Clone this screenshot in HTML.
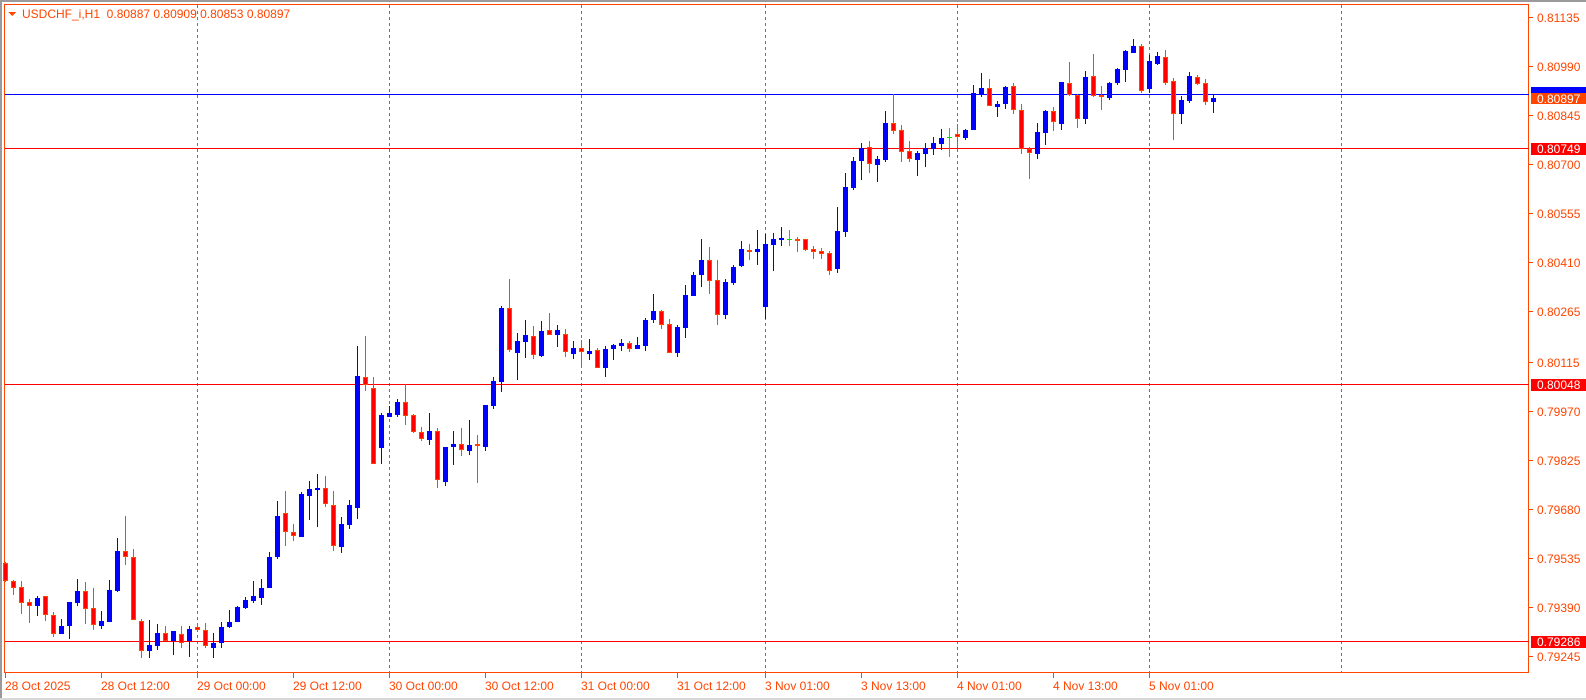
<!DOCTYPE html>
<html><head><meta charset="utf-8"><style>
html,body{margin:0;padding:0;background:#fff;width:1586px;height:700px;overflow:hidden}
svg{display:block}
text{font-family:"Liberation Sans",sans-serif;font-size:12px}
</style></head><body>
<svg width="1586" height="700" viewBox="0 0 1586 700" xmlns="http://www.w3.org/2000/svg" shape-rendering="crispEdges">
<rect x="0" y="0" width="1586" height="700" fill="#fff"/>
<rect x="0" y="0" width="1586" height="2" fill="#9a9a9a"/>
<rect x="0" y="0" width="2" height="700" fill="#9a9a9a"/>
<rect x="0" y="698" width="1586" height="2" fill="#d8d8d8"/>
<rect x="4.5" y="4.5" width="1524" height="668" fill="none" stroke="#ff4500" stroke-width="1"/>
<g stroke="#ff4500" stroke-width="1" stroke-dasharray="3,3">
<line x1="197.5" y1="5" x2="197.5" y2="672"/>
<line x1="389.5" y1="5" x2="389.5" y2="672"/>
<line x1="581.5" y1="5" x2="581.5" y2="672"/>
<line x1="765.5" y1="5" x2="765.5" y2="672"/>
<line x1="957.5" y1="5" x2="957.5" y2="672"/>
<line x1="1149.5" y1="5" x2="1149.5" y2="672"/>
<line x1="1341.5" y1="5" x2="1341.5" y2="672"/>
</g>
<rect x="5" y="94" width="1524" height="1" fill="#0000ff"/>
<rect x="5" y="148" width="1524" height="1" fill="#ff0000"/>
<rect x="5" y="384" width="1524" height="1" fill="#ff0000"/>
<rect x="5" y="641" width="1524" height="1" fill="#ff0000"/>
<polygon points="8,12 16,12 12,16" fill="#ff4500"/>
<text x="22" y="18" fill="#ff4500" xml:space="preserve">USDCHF_i,H1  0.80887 0.80909 0.80853 0.80897</text>
<path fill="#0000ff" d="M35 598h5v8h-5zM37 596h1v20h-1zM59 626h5v8h-5zM61 619h1v15h-1zM67 602h5v24h-5zM69 602h1v37h-1zM75 591h5v12h-5zM77 579h1v27h-1zM99 621h5v5h-5zM101 611h1v18h-1zM107 590h5v32h-5zM109 580h1v42h-1zM115 551h5v40h-5zM117 538h1v54h-1zM147 645h5v6h-5zM149 620h1v38h-1zM155 633h5v13h-5zM157 624h1v26h-1zM171 631h5v10h-5zM173 631h1v24h-1zM187 629h5v12h-5zM189 626h1v31h-1zM211 643h5v5h-5zM213 633h1v25h-1zM219 627h5v16h-5zM221 622h1v26h-1zM227 622h5v5h-5zM229 610h1v18h-1zM235 607h5v15h-5zM237 606h1v16h-1zM243 600h5v8h-5zM245 597h1v12h-1zM251 596h5v5h-5zM253 581h1v22h-1zM259 588h5v10h-5zM261 579h1v26h-1zM267 557h5v31h-5zM269 552h1v36h-1zM275 516h5v41h-5zM277 501h1v58h-1zM299 494h5v43h-5zM301 492h1v45h-1zM307 489h5v7h-5zM309 481h1v39h-1zM315 488h5v2h-5zM317 474h1v53h-1zM339 524h5v23h-5zM341 517h1v36h-1zM347 505h5v20h-5zM349 500h1v29h-1zM355 376h5v132h-5zM357 346h1v173h-1zM379 415h5v33h-5zM381 413h1v51h-1zM387 413h5v4h-5zM389 406h1v11h-1zM395 402h5v13h-5zM397 399h1v18h-1zM427 431h5v9h-5zM429 413h1v32h-1zM443 447h5v35h-5zM445 447h1v39h-1zM451 444h5v3h-5zM453 431h1v34h-1zM467 445h5v6h-5zM469 420h1v35h-1zM483 405h5v42h-5zM485 405h1v46h-1zM491 381h5v25h-5zM493 377h1v32h-1zM499 308h5v74h-5zM501 306h1v86h-1zM515 341h5v12h-5zM517 333h1v47h-1zM523 335h5v7h-5zM525 320h1v38h-1zM539 331h5v25h-5zM541 321h1v36h-1zM555 330h5v5h-5zM557 325h1v22h-1zM571 348h5v6h-5zM573 341h1v18h-1zM587 351h5v3h-5zM589 339h1v21h-1zM603 349h5v19h-5zM605 346h1v31h-1zM611 345h5v4h-5zM613 344h1v16h-1zM619 343h5v3h-5zM621 339h1v12h-1zM635 345h5v4h-5zM637 337h1v12h-1zM643 320h5v26h-5zM645 318h1v33h-1zM651 311h5v9h-5zM653 294h1v29h-1zM675 327h5v26h-5zM677 325h1v32h-1zM683 295h5v33h-5zM685 285h1v53h-1zM691 275h5v21h-5zM693 272h1v24h-1zM699 260h5v15h-5zM701 239h1v48h-1zM723 282h5v33h-5zM725 279h1v40h-1zM731 267h5v16h-5zM733 265h1v20h-1zM739 249h5v17h-5zM741 241h1v26h-1zM755 249h5v3h-5zM757 230h1v35h-1zM763 244h5v63h-5zM765 234h1v85h-1zM771 239h5v6h-5zM773 233h1v38h-1zM779 238h5v2h-5zM781 227h1v19h-1zM835 231h5v38h-5zM837 207h1v66h-1zM843 187h5v45h-5zM845 173h1v64h-1zM851 161h5v27h-5zM853 157h1v33h-1zM859 148h5v13h-5zM861 143h1v37h-1zM875 159h5v6h-5zM877 156h1v26h-1zM883 123h5v37h-5zM885 111h1v51h-1zM915 153h5v7h-5zM917 151h1v25h-1zM923 148h5v6h-5zM925 143h1v24h-1zM931 143h5v6h-5zM933 137h1v18h-1zM939 138h5v6h-5zM941 129h1v21h-1zM963 130h5v8h-5zM965 129h1v11h-1zM971 93h5v37h-5zM973 85h1v45h-1zM979 88h5v6h-5zM981 73h1v24h-1zM995 104h5v3h-5zM997 101h1v16h-1zM1003 87h5v17h-5zM1005 86h1v23h-1zM1035 132h5v22h-5zM1037 123h1v36h-1zM1043 111h5v22h-5zM1045 110h1v35h-1zM1059 82h5v42h-5zM1061 82h1v48h-1zM1083 77h5v42h-5zM1085 71h1v53h-1zM1107 83h5v15h-5zM1109 82h1v18h-1zM1115 69h5v14h-5zM1117 68h1v17h-1zM1123 51h5v19h-5zM1125 50h1v32h-1zM1131 46h5v7h-5zM1133 39h1v14h-1zM1147 61h5v28h-5zM1149 55h1v38h-1zM1155 56h5v8h-5zM1157 52h1v13h-1zM1179 100h5v14h-5zM1181 96h1v28h-1zM1187 76h5v25h-5zM1189 72h1v31h-1zM1211 98h5v4h-5zM1213 94h1v19h-1z"/>
<path fill="#ff4500" d="M3 563h5v18h-5zM5 562h1v20h-1zM11 581h5v7h-5zM13 580h1v15h-1zM19 587h5v16h-5zM21 581h1v33h-1zM27 602h5v4h-5zM29 599h1v24h-1zM43 596h5v19h-5zM45 596h1v25h-1zM51 615h5v19h-5zM53 612h1v25h-1zM83 591h5v18h-5zM85 582h1v42h-1zM91 608h5v17h-5zM93 588h1v42h-1zM123 551h5v6h-5zM125 516h1v49h-1zM131 557h5v63h-5zM133 549h1v71h-1zM139 621h5v30h-5zM141 619h1v39h-1zM163 633h5v8h-5zM165 626h1v15h-1zM179 634h5v9h-5zM181 626h1v22h-1zM195 627h5v3h-5zM197 623h1v7h-1zM203 630h5v16h-5zM205 623h1v25h-1zM283 513h5v19h-5zM285 491h1v55h-1zM291 532h5v4h-5zM293 524h1v17h-1zM323 488h5v16h-5zM325 476h1v31h-1zM331 505h5v41h-5zM333 491h1v60h-1zM363 377h5v8h-5zM365 336h1v55h-1zM371 388h5v76h-5zM373 377h1v87h-1zM403 402h5v14h-5zM405 384h1v41h-1zM411 415h5v17h-5zM413 414h1v19h-1zM419 432h5v7h-5zM421 427h1v14h-1zM435 431h5v49h-5zM437 428h1v60h-1zM459 444h5v6h-5zM461 428h1v28h-1zM475 444h5v2h-5zM477 435h1v48h-1zM507 308h5v42h-5zM509 279h1v73h-1zM531 336h5v19h-5zM533 326h1v33h-1zM547 330h5v5h-5zM549 313h1v22h-1zM563 334h5v18h-5zM565 329h1v28h-1zM579 348h5v4h-5zM581 340h1v27h-1zM595 350h5v18h-5zM597 348h1v20h-1zM627 343h5v6h-5zM629 341h1v11h-1zM659 311h5v14h-5zM661 310h1v19h-1zM667 324h5v29h-5zM669 319h1v34h-1zM707 260h5v21h-5zM709 247h1v47h-1zM715 280h5v35h-5zM717 260h1v65h-1zM747 250h5v2h-5zM749 244h1v16h-1zM795 239h5v2h-5zM797 237h1v15h-1zM803 239h5v11h-5zM805 239h1v12h-1zM811 249h5v3h-5zM813 246h1v13h-1zM819 251h5v3h-5zM821 248h1v11h-1zM827 253h5v18h-5zM829 251h1v24h-1zM867 147h5v17h-5zM869 141h1v32h-1zM891 123h5v8h-5zM893 94h1v40h-1zM899 130h5v22h-5zM901 125h1v37h-1zM907 151h5v8h-5zM909 141h1v21h-1zM955 134h5v3h-5zM957 124h1v24h-1zM987 88h5v18h-5zM989 79h1v27h-1zM1011 86h5v24h-5zM1013 83h1v31h-1zM1019 110h5v39h-5zM1021 104h1v50h-1zM1027 149h5v4h-5zM1029 147h1v32h-1zM1051 111h5v11h-5zM1053 107h1v24h-1zM1067 83h5v12h-5zM1069 62h1v34h-1zM1075 95h5v24h-5zM1077 94h1v34h-1zM1091 76h5v20h-5zM1093 54h1v43h-1zM1099 95h5v2h-5zM1101 86h1v24h-1zM1139 46h5v45h-5zM1141 44h1v49h-1zM1163 57h5v26h-5zM1165 50h1v35h-1zM1171 81h5v33h-5zM1173 78h1v62h-1zM1195 77h5v7h-5zM1197 75h1v10h-1zM1203 83h5v19h-5zM1205 79h1v26h-1z"/>
<path fill="#ff0000" d="M4 564h3v16h-3zM12 582h3v5h-3zM20 588h3v14h-3zM28 603h3v2h-3zM44 597h3v17h-3zM52 616h3v17h-3zM84 592h3v16h-3zM92 609h3v15h-3zM124 552h3v4h-3zM132 558h3v61h-3zM140 622h3v28h-3zM164 634h3v6h-3zM180 635h3v7h-3zM196 628h3v1h-3zM204 631h3v14h-3zM284 514h3v17h-3zM292 533h3v2h-3zM324 489h3v14h-3zM332 506h3v39h-3zM364 378h3v6h-3zM372 389h3v74h-3zM404 403h3v12h-3zM412 416h3v15h-3zM420 433h3v5h-3zM436 432h3v47h-3zM460 445h3v4h-3zM508 309h3v40h-3zM532 337h3v17h-3zM548 331h3v3h-3zM564 335h3v16h-3zM580 349h3v2h-3zM596 351h3v16h-3zM628 344h3v4h-3zM660 312h3v12h-3zM668 325h3v27h-3zM708 261h3v19h-3zM716 281h3v33h-3zM804 240h3v9h-3zM812 250h3v1h-3zM820 252h3v1h-3zM828 254h3v16h-3zM868 148h3v15h-3zM892 124h3v6h-3zM900 131h3v20h-3zM908 152h3v6h-3zM956 135h3v1h-3zM988 89h3v16h-3zM1012 87h3v22h-3zM1020 111h3v37h-3zM1028 150h3v2h-3zM1052 112h3v9h-3zM1068 84h3v10h-3zM1076 96h3v22h-3zM1092 77h3v18h-3zM1140 47h3v43h-3zM1164 58h3v24h-3zM1172 82h3v31h-3zM1196 78h3v5h-3zM1204 84h3v17h-3z"/>
<path fill="#00e000" d="M789 230h1v16h-1zM787 239h5v1h-5zM949 128h1v29h-1zM947 137h5v1h-5z"/>
<g fill="#ff4500">
<rect x="1529" y="17" width="4" height="1"/><rect x="1529" y="66" width="4" height="1"/><rect x="1529" y="115" width="4" height="1"/><rect x="1529" y="164" width="4" height="1"/><rect x="1529" y="213" width="4" height="1"/><rect x="1529" y="262" width="4" height="1"/><rect x="1529" y="311" width="4" height="1"/><rect x="1529" y="362" width="4" height="1"/><rect x="1529" y="411" width="4" height="1"/><rect x="1529" y="460" width="4" height="1"/><rect x="1529" y="509" width="4" height="1"/><rect x="1529" y="558" width="4" height="1"/><rect x="1529" y="607" width="4" height="1"/><rect x="1529" y="656" width="4" height="1"/>
<text x="1537" y="22">0.81135</text>
<text x="1537" y="71">0.80990</text>
<text x="1537" y="120">0.80845</text>
<text x="1537" y="169">0.80700</text>
<text x="1537" y="218">0.80555</text>
<text x="1537" y="267">0.80410</text>
<text x="1537" y="316">0.80265</text>
<text x="1537" y="367">0.80115</text>
<text x="1537" y="416">0.79970</text>
<text x="1537" y="465">0.79825</text>
<text x="1537" y="514">0.79680</text>
<text x="1537" y="563">0.79535</text>
<text x="1537" y="612">0.79390</text>
<text x="1537" y="661">0.79245</text>
</g>
<rect x="1531" y="87" width="55" height="6" fill="#0000ff"/>
<rect x="1531" y="93" width="55" height="11" fill="#ff4500"/>
<text x="1537" y="103" fill="#fff">0.80897</text>
<rect x="1531" y="143" width="55" height="12" fill="#ff0000"/>
<text x="1537" y="153" fill="#fff">0.80749</text>
<rect x="1531" y="379" width="55" height="12" fill="#ff0000"/>
<text x="1537" y="389" fill="#fff">0.80048</text>
<rect x="1531" y="636" width="55" height="12" fill="#ff0000"/>
<text x="1537" y="646" fill="#fff">0.79286</text>
<g fill="#ff4500">
<rect x="5" y="673" width="1" height="5"/><rect x="101" y="673" width="1" height="5"/><rect x="197" y="673" width="1" height="5"/><rect x="293" y="673" width="1" height="5"/><rect x="389" y="673" width="1" height="5"/><rect x="485" y="673" width="1" height="5"/><rect x="581" y="673" width="1" height="5"/><rect x="677" y="673" width="1" height="5"/><rect x="765" y="673" width="1" height="5"/><rect x="861" y="673" width="1" height="5"/><rect x="957" y="673" width="1" height="5"/><rect x="1053" y="673" width="1" height="5"/><rect x="1149" y="673" width="1" height="5"/>
<text x="5" y="690">28 Oct 2025</text>
<text x="101" y="690">28 Oct 12:00</text>
<text x="197" y="690">29 Oct 00:00</text>
<text x="293" y="690">29 Oct 12:00</text>
<text x="389" y="690">30 Oct 00:00</text>
<text x="485" y="690">30 Oct 12:00</text>
<text x="581" y="690">31 Oct 00:00</text>
<text x="677" y="690">31 Oct 12:00</text>
<text x="765" y="690">3 Nov 01:00</text>
<text x="861" y="690">3 Nov 13:00</text>
<text x="957" y="690">4 Nov 01:00</text>
<text x="1053" y="690">4 Nov 13:00</text>
<text x="1149" y="690">5 Nov 01:00</text>
</g>
</svg>
</body></html>
